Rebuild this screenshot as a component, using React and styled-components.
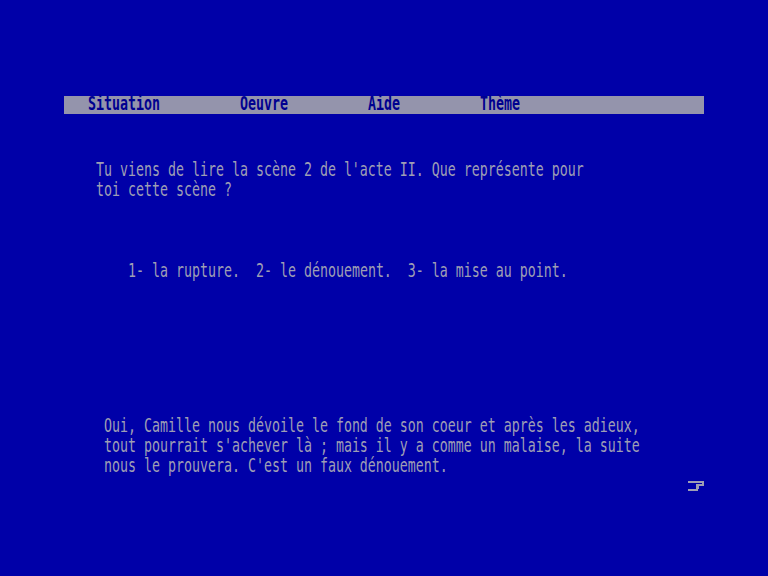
import React from "react";
import styled, { createGlobalStyle } from "styled-components";

const Global = createGlobalStyle`
  html, body { margin: 0; padding: 0; background: #0000a8; }
  body { font-family: "DejaVu Sans Mono", "Liberation Mono", monospace; }
`;

const Screen = styled.div`
  width: 640px;
  min-height: 480px;
  padding: 96px 0 0 64px;
  display: flex;
  flex-direction: column;
`;

const MenuBar = styled.nav`
  width: 640px;
  height: 18px;
  background: #9494ac;
  display: grid;
  grid-template-columns: repeat(80, 8px);
  align-items: start;
`;

const MenuItem = styled.span`
  grid-column: ${(p) => p.$col + 1} / span ${(p) => p.$span};
  grid-row: 1;
  height: 18px;
  line-height: 20px;
  font-size: 13.29px;
  font-weight: bold;
  color: #000090;
  white-space: pre;
  display: inline-block;
  transform: scaleY(1.4);
  transform-origin: 0 14.6px;
`;

const Block = styled.div`
  margin-top: ${(p) => p.$top}px;
  padding-left: ${(p) => p.$col * 8}px;
  display: flex;
  flex-direction: column;
`;

const Line = styled.div`
  height: 20px;
  line-height: 20px;
  font-size: 13.29px;
  color: #9e9eb4;
  white-space: pre;
  transform: scaleY(1.45);
  transform-origin: 0 14.6px;
`;

const IconRow = styled.div`
  display: flex;
  justify-content: flex-end;
  margin-top: 2px;
`;

const PageIcon = () => (
  <svg width="16" height="12" viewBox="0 0 16 12" fill="#9e9eb4">
    <rect x="0" y="1" width="16" height="2" />
    <rect x="14" y="1" width="2" height="5" />
    <rect x="8" y="4" width="8" height="2" />
    <rect x="8" y="6" width="3" height="3" />
    <rect x="0" y="9" width="10" height="2" />
  </svg>
);

const menu = [
  { label: "Situation", col: 3 },
  { label: "Oeuvre", col: 22 },
  { label: "Aide", col: 38 },
  { label: "Thème", col: 52 },
];

export default function App() {
  return (
    <>
      <Global />
      <Screen>
        <MenuBar>
          {menu.map((m) => (
            <MenuItem key={m.label} $col={m.col} $span={m.label.length}>
              {m.label}
            </MenuItem>
          ))}
        </MenuBar>
        <Block $top={48} $col={4}>
          <Line>Tu viens de lire la scène 2 de l'acte II. Que représente pour</Line>
          <Line>toi cette scène ?</Line>
        </Block>
        <Block $top={61} $col={8}>
          <Line>1- la rupture.  2- le dénouement.  3- la mise au point.</Line>
        </Block>
        <Block $top={135} $col={5}>
          <Line>Oui, Camille nous dévoile le fond de son coeur et après les adieux,</Line>
          <Line>tout pourrait s'achever là ; mais il y a comme un malaise, la suite</Line>
          <Line>nous le prouvera. C'est un faux dénouement.</Line>
        </Block>
        <IconRow>
          <PageIcon />
        </IconRow>
      </Screen>
    </>
  );
}
